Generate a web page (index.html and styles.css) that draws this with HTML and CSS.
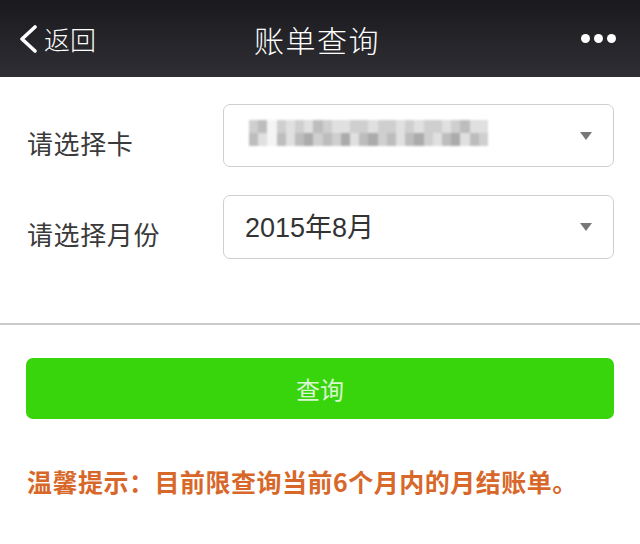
FILE: index.html
```html
<!DOCTYPE html>
<html lang="zh-CN">
<head>
<meta charset="utf-8">
<title>账单查询</title>
<link rel="stylesheet" href="styles.css">
</head>
<body>
<header class="nav">
  <div class="nav-left">
    <svg class="chev" width="20" height="28" viewBox="0 0 20 28"><polyline points="17,2 4,14 17,26" fill="none" stroke="#fff" stroke-width="3.6" stroke-linecap="round" stroke-linejoin="round"/></svg>
    <span class="back">返回</span>
  </div>
  <div class="nav-title">账单查询</div>
  <div class="nav-right"><span class="dot"></span><span class="dot"></span><span class="dot"></span></div>
</header>
<main>
  <section class="form">
    <div class="row">
      <div class="label">请选择卡</div>
      <div class="select">
        <div class="mosaic">
          <span class="m2"></span><span class="m3"></span><span class="m0"></span><span class="m2"></span><span class="m1"></span><span class="m2"></span><span class="m1"></span><span class="m3"></span><span class="m2"></span><span class="m1"></span><span class="m1"></span><span class="m2"></span><span class="m2"></span><span class="m1"></span><span class="m2"></span><span class="m2"></span><span class="m1"></span><span class="m2"></span><span class="m1"></span><span class="m2"></span><span class="m2"></span><span class="m1"></span><span class="m2"></span><span class="m3"></span><span class="m1"></span><span class="m1"></span>
          <span class="m3"></span><span class="m1"></span><span class="m0"></span><span class="m3"></span><span class="m1"></span><span class="m3"></span><span class="m4"></span><span class="m2"></span><span class="m3"></span><span class="m2"></span><span class="m4"></span><span class="m1"></span><span class="m3"></span><span class="m4"></span><span class="m2"></span><span class="m3"></span><span class="m1"></span><span class="m3"></span><span class="m4"></span><span class="m2"></span><span class="m1"></span><span class="m3"></span><span class="m4"></span><span class="m1"></span><span class="m3"></span><span class="m2"></span>
        </div>
        <span class="caret"></span>
      </div>
    </div>
    <div class="row">
      <div class="label">请选择月份</div>
      <div class="select tall">
        <span class="value">2015年8月</span>
        <span class="caret"></span>
      </div>
    </div>
  </section>
  <hr class="divider">
  <div class="actions">
    <button class="btn">查询</button>
  </div>
  <p class="tip">温馨提示：目前限查询当前6个月内的月结账单。</p>
</main>
</body>
</html>
```
FILE: styles.css
```css
* { box-sizing: border-box; }
html, body { margin: 0; padding: 0; background: #fff; }
body {
  width: 640px;
  height: 544px;
  overflow: hidden;
  font-family: "Noto Sans CJK SC", "Liberation Sans", sans-serif;
  color: #333;
}
.nav {
  height: 77px;
  display: grid;
  grid-template-columns: 1fr auto 1fr;
  align-items: center;
  padding: 0 24px 0 18px;
  background: linear-gradient(#1a1a1e, #2e2e34);
  color: #fff;
}
.nav-left { display: flex; align-items: center; }
.chev { display: block; margin-right: 6px; }
.back { font-size: 26px; line-height: 30px; font-weight: 300; }
.nav-title { font-size: 30px; line-height: 36px; letter-spacing: 1.5px; font-weight: 300; }
.nav-right { display: flex; justify-content: flex-end; gap: 4px; }
.dot { width: 9px; height: 9px; border-radius: 50%; background: #fff; }

.form { padding: 27px 26px 0 27px; display: flex; flex-direction: column; gap: 28px; }
.row { display: flex; align-items: center; }
.label { width: 196px; font-size: 26px; line-height: 34px; color: #3a3a3a; padding-top: 14px; letter-spacing: 0.6px; }
.select {
  flex: 1;
  height: 63px;
  border: 1px solid #cfcfcf;
  border-radius: 7px;
  display: flex;
  align-items: center;
  justify-content: space-between;
  padding: 0 21px 0 21px;
}
.select.tall { height: 64px; }
.value { font-family: "Liberation Sans", "Noto Sans CJK SC", sans-serif; font-size: 27px; color: #333; margin-top: -4px; }
.caret {
  width: 0; height: 0;
  border-left: 6px solid transparent;
  border-right: 6px solid transparent;
  border-top: 8px solid #777;
}
.mosaic {
  display: grid;
  grid-template-columns: repeat(26, 9.2px);
  grid-auto-rows: 13px;
  margin-left: 4px;
  margin-top: -6px;
  filter: blur(0.8px);
}
.m0 { background: #f4f4f4; }
.m1 { background: #e0e0e0; }
.m2 { background: #cfcfcf; }
.m3 { background: #bdbdbd; }
.m4 { background: #ababab; }

.divider { margin: 64px 0 0 0; border: 0; height: 2px; background: #cacaca; }
.actions { padding: 33px 26px 0 26px; }
.btn {
  display: block;
  width: 100%;
  height: 61px;
  border: 0;
  border-radius: 7px;
  background: #38d40c;
  color: rgba(255,255,255,0.82);
  font-family: "Noto Sans CJK SC", sans-serif;
  font-size: 24px;
  padding: 0;
}
.tip {
  margin: 44px 0 0 0;
  padding-left: 27px;
  font-size: 25px;
  line-height: 36px;
  font-weight: bold;
  letter-spacing: 0.5px;
  color: #d8672a;
}
```
